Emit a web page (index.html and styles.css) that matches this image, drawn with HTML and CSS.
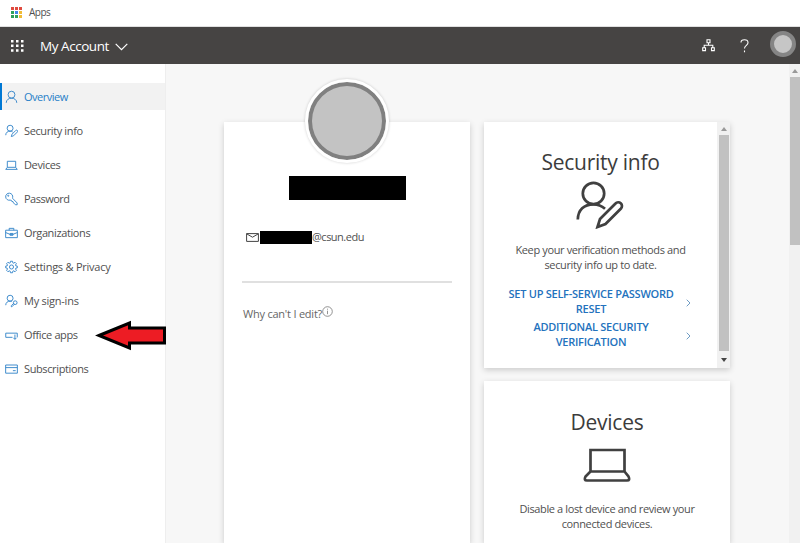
FILE: index.html
```html
<!DOCTYPE html>
<html lang="en">
<head>
<meta charset="utf-8">
<title>My Account</title>
<link rel="stylesheet" href="styles.css">
</head>
<body>
<div class="bookmarks">
  <svg class="apps-grid" viewBox="0 0 11 11"><path fill="#e04a3f" d="M0 0h3v3H0zM4 0h3v3H4zM8 0h3v3H8z"/><path fill="#2ea05a" d="M0 4h3v3H0zM0 8h3v3H0zM4 8h3v3H4z"/><path fill="#3e86e8" d="M4 4h3v3H4z"/><path fill="#f0bb35" d="M8 4h3v3H8zM8 8h3v3H8z"/></svg>
  <span class="apps-label">Apps</span>
</div>
<header class="topbar">
  <svg class="waffle" viewBox="0 0 13 12"><path fill="#fff" d="M0 0h2.500v2.500H0zM5 0h2.500v2.500H5zM10 0h2.500v2.500H10zM0 4.600h2.500v2.500H0zM5 4.600h2.500v2.500H5zM10 4.600h2.500v2.500H10zM0 9.200h2.500v2.500H0zM5 9.200h2.500v2.500H5zM10 9.200h2.500v2.500H10z"/></svg>
  <span class="brand">My Account</span>
  <svg class="chevron" viewBox="0 0 13 8"><path d="M.7.8 6.500 6.700 12.300.8"/></svg>
  <span class="spacer"></span>
  <svg class="org" viewBox="0 0 13 13"><path d="M5 .8h3v3H5zM.7 8.800h2.800v2.800H.7zM9.500 8.800h2.800v2.800H9.500zM6.500 4v2.200M2.200 8.500V6.200h8.600v2.300"/></svg>
  <svg class="help" viewBox="0 0 9 14"><path d="M1 3.500C1 1.800 2.300.8 4.400.8S8 2 8 3.700C8 6.400 4.500 6.300 4.500 9.500M4.500 11.500v1.800"/></svg>
  <span class="me"></span>
</header>
<div class="shell">
  <nav class="sidebar">
    <a class="item active"><svg viewBox="0 0 14 14"><circle cx="7" cy="4.500" r="3.700"/><path d="M1.300 13.300C1.300 10 4 8.300 7 8.300s5.700 1.700 5.700 5"/></svg><span class="tight">Overview</span></a>
    <a class="item"><svg viewBox="0 0 14 14"><circle cx="5.500" cy="4" r="3.200"/><path d="M.8 11.500C.8 8.500 3 7.200 5.500 7.200q1.600 0 2.800.9M6.800 13l.8-2.600 4-4a1.100 1.100 0 0 1 1.700 1.700l-4 4z"/></svg><span>Security info</span></a>
    <a class="item"><svg viewBox="0 0 14 14"><path d="M2.500 3h9v6.500h-9zM2.500 9.500.8 11.700h12.400L11.500 9.500"/></svg><span>Devices</span></a>
    <a class="item"><svg viewBox="0 0 14 14"><path d="M8.200 5.500A3.800 3.800 0 1 0 5.500 8.200l1.300.2.500 1.200 1.400.3.500 1.300 2 2h1.900v-1.900L8.200 6.300z"/><circle cx="3.500" cy="3.500" r=".6"/></svg><span class="tight">Password</span></a>
    <a class="item"><svg viewBox="0 0 14 14"><path d="M.7 4h12.600v8H.7zM4.500 4V2h5v2M.7 6.500 5.500 8.500h3l4.800-2M5.500 7.500h3v2h-3z"/></svg><span>Organizations</span></a>
    <a class="item"><svg viewBox="0 0 14 14"><circle cx="7" cy="7" r="2.200"/><path d="m5.900.8-.3 1.700-1 .4-1.400-1L1.700 3.400l1 1.400-.4 1-1.600.3v1.800l1.600.3.400 1-1 1.400 1.500 1.500 1.400-1 1 .4.300 1.700h2.200l.3-1.700 1-.4 1.400 1 1.500-1.500-1-1.400.4-1 1.600-.3V6.100l-1.600-.3-.4-1 1-1.400-1.500-1.500-1.400 1-1-.4L8.100.8z"/></svg><span class="loose">Settings &amp; Privacy</span></a>
    <a class="item"><svg viewBox="0 0 14 14"><circle cx="5.500" cy="4" r="3.200"/><path d="M.8 11.500C.8 8.500 3 7.200 5.500 7.200q1 0 1.800.3M10.200 10.300l-2.700 2.900H6.800V12l2.500-2.500"/><circle cx="11" cy="8.800" r="2"/></svg><span class="loose">My sign-ins</span></a>
    <a class="item"><svg viewBox="0 0 14 14"><path d="M8 9.500H.8V5h12.400v4.500M10.700 6.500v5M9 10l1.700 1.700L12.400 10"/></svg><span>Office apps</span></a>
    <a class="item"><svg viewBox="0 0 14 14"><path d="M.7 2.700h12.600v8.800H.7zM.7 5.500h12.600M8.500 8.800h3"/></svg><span>Subscriptions</span></a>
  </nav>
  <main class="content">
    <section class="card profile">
      <div class="avatar"></div>
      <div class="name-mask"></div>
      <div class="mail"><svg viewBox="0 0 13 9"><path d="M.6.6h11.800v7.800H.6zM.6.8l5.900 3.400L12.400.8"/></svg><i class="mail-mask"></i><span>@csun.edu</span></div>
      <div class="why"><span>Why can't I edit?</span><svg viewBox="0 0 11 11"><circle cx="5.500" cy="5.500" r="4.800"/><path d="M5.500 4.700v3.500M5.500 2.700v1"/></svg></div>
    </section>
    <div class="tiles">
      <section class="card security">
        <div class="card-body">
          <h2>Security info</h2>
          <svg class="big-person" viewBox="0 0 48 48"><circle cx="17.500" cy="12.500" r="10.700"/><path d="M1.800 38.500C2 29 8 23.300 17.500 23.300q6.500 0 11.500 4.500M21.500 46l2.500-8L39.500 22.500a3.700 3.700 0 0 1 5.500 5L29.500 43z"/></svg>
          <p>Keep your verification methods and<br>security info up to date.</p>
          <div class="link"><span>SET UP SELF-SERVICE PASSWORD<br>RESET</span><svg viewBox="0 0 5 8"><path d="m.7.7 3.300 3.300L.7 7.300"/></svg></div>
          <div class="link"><span>ADDITIONAL SECURITY<br>VERIFICATION</span><svg viewBox="0 0 5 8"><path d="m.7.7 3.300 3.300L.7 7.300"/></svg></div>
        </div>
        <div class="card-scroll"><i class="up"></i><i class="thumb"></i><i class="down"></i></div>
      </section>
      <section class="card devices">
        <h2>Devices</h2>
        <svg class="big-laptop" viewBox="0 0 48 34"><path d="M7.500 2h34v21.500h-34zM7.500 23.500 2.500 28.500Q.5 32.500 4 32.500h40q3.500 0 1.500-4l-4-5"/></svg>
        <p>Disable a lost device and review your<br>connected devices.</p>
      </section>
    </div>
  </main>
  <div class="page-scroll"><i class="up"></i><i class="thumb"></i></div>
</div>
<svg class="arrow" viewBox="0 0 71 31"><path d="M4 15.500 34.500 3v5H69.500v15H34.500v5z"/></svg>
</body>
</html>
```

FILE: styles.css
```css
* { box-sizing: border-box; }
body { margin: 0; width: 800px; height: 543px; overflow: hidden; background: #fff; font: 11px/15px "Open Sans", "Noto Sans", sans-serif; color: #505050; position: relative; }
svg { display: block; flex: none; fill: none; }
span { white-space: nowrap; }
.bookmarks { height: 27px; display: flex; align-items: center; padding: 0 0 2px 11px; gap: 7px; font-size: 10px; border-bottom: 1px solid #e0e0e0; }
.apps-label { letter-spacing: -.6px; letter-spacing: -.5px; }
.apps-grid { width: 11px; height: 11px; }
.topbar { height: 37px; background: #464443; display: flex; align-items: center; padding: 0 4px 0 11px; }
.waffle { width: 13px; height: 12px; }
.brand { color: #fff; font-size: 13.5px; margin-left: 16px; line-height: 20px; width: 69px; letter-spacing: -.45px; }
.chevron { width: 13px; height: 8px; margin: 2px 0 0 6px; stroke: #fff; stroke-width: 1.2; }
.spacer { flex: 1; }
.org { width: 13px; height: 13px; stroke: #fff; stroke-width: 1.1; margin-right: 25px; }
.help { width: 9px; height: 14px; stroke: #fff; stroke-width: 1.1; margin-right: 21px; }
.me { width: 26px; height: 26px; border-radius: 50%; background: #c6c6c6; border: 4px solid #858585; margin-top: -3px; }
.shell { display: flex; height: 479px; }
.sidebar { width: 166px; padding-top: 19px; display: flex; flex-direction: column; gap: 7px; border-right: 1px solid #eee; letter-spacing: -.38px; }
.tight { letter-spacing: -.5px; }
.loose { letter-spacing: -.24px; }
.item { height: 27px; display: flex; align-items: center; gap: 6px; padding-left: 5px; }
.item svg { width: 13px; height: 14px; stroke: #3485c9; stroke-width: 1; }
.active { background: #f2f2f2; border-left: 2px solid #0078d4; padding-left: 3px; color: #2780c8; }
.content { width: 623px; height: 479px; overflow: hidden; background: #f7f7f7; padding: 58px 0 0 58px; display: flex; gap: 14px; align-items: flex-start; }
.card { width: 246px; background: #fff; box-shadow: 0 2px 6px rgba(0,0,0,.18); }
.profile { height: 421px; padding: 0 18px; }
.avatar { width: 84px; height: 84px; border-radius: 50%; margin: -43px auto 0; background: #c3c3c3; border: 3px solid #fff; box-shadow: inset 0 0 0 4px #808080, 0 0 3px rgba(0,0,0,.2); }
.name-mask { width: 117px; height: 24px; background: #000; margin: 13px 0 0 47px; }
.mail { margin-top: 23px; height: 60px; border-bottom: 2px solid #e0e0e0; padding: 6px 0 0 4px; display: flex; align-items: flex-start; width: 210px; letter-spacing: -.5px; }
.mail svg { width: 13px; height: 9px; margin-top: 4px; stroke: #444; stroke-width: 1; }
.mail-mask { width: 52px; height: 13px; background: #000; margin: 2px 0 0 1px; }
.why { display: flex; margin-top: 23px; color: #666; letter-spacing: -.22px; padding-left: 1px; }
.why svg { width: 11px; height: 11px; stroke: #777; stroke-width: .8; }
.tiles { display: flex; flex-direction: column; gap: 13px; }
.security { height: 246px; display: flex; }
.card-body { width: 233px; padding-top: 25px; }
h2 { margin: 0; font-weight: 400; font-size: 21px; line-height: 31px; color: #3c3c3c; text-align: center; letter-spacing: -.25px; }
.big-person { width: 48px; height: 48px; stroke: #404040; stroke-width: 2.7; margin: 3px 0 0 92px; }
p { margin: 0; text-align: center; letter-spacing: -.37px; }
.security p { margin-top: 13px; height: 44px; }
.link { display: flex; align-items: center; height: 30px; margin-bottom: 3px; color: #2372bd; text-align: center; font-weight: 600; letter-spacing: -.26px; }
.link > span { width: 168px; margin-left: 23px; }
.link svg { width: 5px; height: 8px; stroke: #6f9cc4; stroke-width: 1; margin-left: 11px; margin-top: 3px; }
.card-scroll { width: 13px; background: #f1f1f1; display: flex; flex-direction: column; align-items: center; }
.up, .down { width: 0; height: 0; border: 3px solid transparent; }
.up { border-top: 0; border-bottom-color: #999; border-bottom-width: 4px; margin: 5px 0 4px; }
.down { border-bottom: 0; border-top-color: #444; border-top-width: 4px; margin-top: 7px; }
.card-scroll .thumb { width: 10px; height: 216px; background: #c1c1c1; }
.devices { height: 162px; padding-top: 26px; }
.big-laptop { width: 48px; height: 34px; margin: 10px auto 0; stroke: #404040; stroke-width: 2.7; }
.devices p { margin-top: 19px; }
.page-scroll { width: 11px; background: #f1f1f1; display: flex; flex-direction: column; align-items: center; }
.page-scroll .thumb { width: 10px; height: 168px; background: #c1c1c1; }
.arrow { position: absolute; left: 95px; top: 320px; width: 71px; height: 31px; fill: #ed1c24; stroke: #000; stroke-width: 3; }
```
